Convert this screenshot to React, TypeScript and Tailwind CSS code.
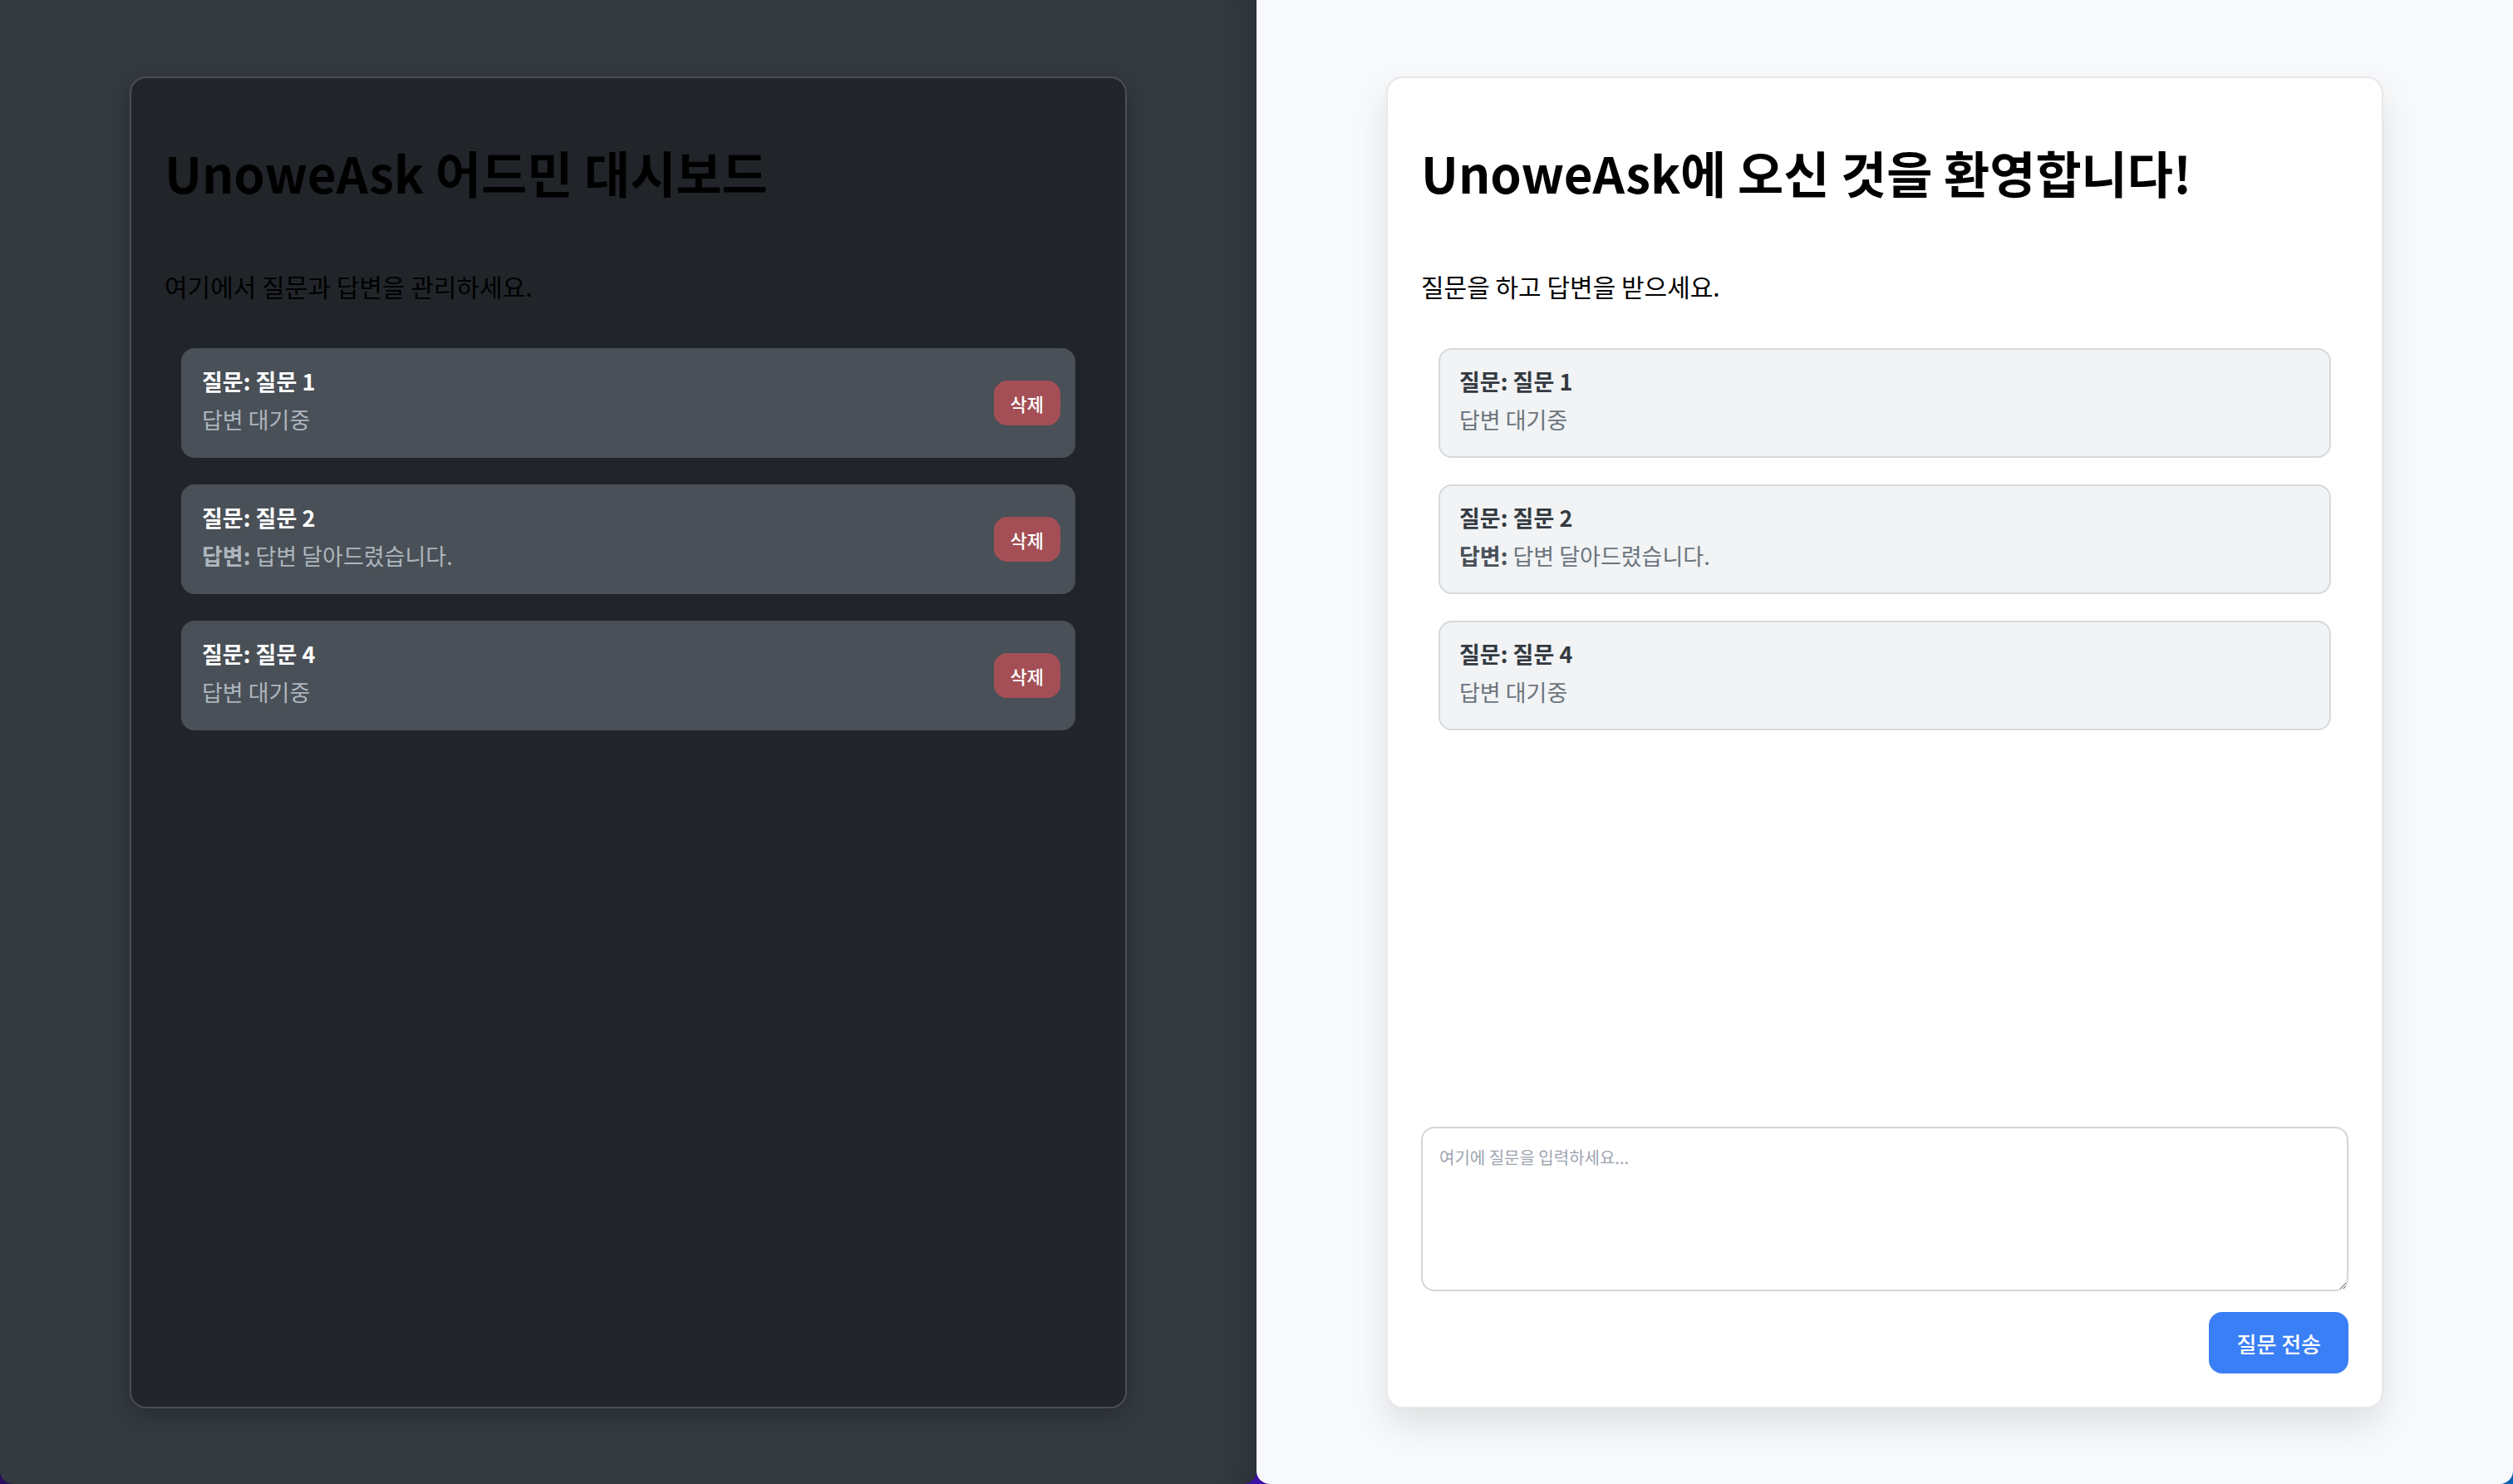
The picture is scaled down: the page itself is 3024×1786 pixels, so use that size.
import { useState } from 'react';

type Question = {
  id: number;
  text: string;
  answer?: string;
};

const questions: Question[] = [
  { id: 1, text: '질문 1' },
  { id: 2, text: '질문 2', answer: '답변 달아드렸습니다.' },
  { id: 4, text: '질문 4' },
];

function AdminPane() {
  return (
    <div className="flex-1 h-full flex flex-col px-[156px] pt-[92px] pb-[91px] bg-[#343a40] rounded-b-[16px] shadow-[inset_-40px_0_40px_-30px_rgba(0,0,0,0.18)]">
      <div className="flex-1 flex flex-col bg-[#212529] border-2 border-[#4a4f55] rounded-[20px] p-10 shadow-[0_8px_30px_rgba(0,0,0,0.25)]">
        <h1 className="mt-[37px] text-[60px] leading-[72px] font-bold text-black">
          UnoweAsk 어드민 대시보드
        </h1>
        <p className="mt-[77px] text-[30px] leading-[48px] text-black">
          여기에서 질문과 답변을 관리하세요.
        </p>

        {/* Question list */}
        <ul className="mt-[51px] px-[20px] flex flex-col gap-[32px]">
          {questions.map((q) => (
            <li
              key={q.id}
              className="flex items-center justify-between bg-[#495057] rounded-[16px] pl-[25px] pr-[18px] pt-[17px] pb-[23px]"
            >
              <div className="text-[27px] leading-[46px]">
                <div className="font-bold text-white">질문: {q.text}</div>
                {q.answer ? (
                  <div className="text-[#adb5bd]">
                    <span className="font-bold">답변:</span> {q.answer}
                  </div>
                ) : (
                  <div className="text-[#adb5bd]">답변 대기중</div>
                )}
              </div>
              <button className="h-[54px] px-[20px] mt-[6px] rounded-[16px] bg-[#a44f56] text-white text-[22px] font-medium">
                삭제
              </button>
            </li>
          ))}
        </ul>
      </div>
    </div>
  );
}

function UserPane() {
  const [text, setText] = useState('');

  return (
    <div className="flex-1 h-full flex flex-col px-[156px] pt-[92px] pb-[91px] bg-[#f8f9fa] rounded-b-[16px]">
      <div className="flex-1 flex flex-col bg-white border-2 border-[#e6e8eb] rounded-[20px] p-10 shadow-[0_20px_40px_rgba(0,0,0,0.1)]">
        <h1 className="mt-[37px] text-[60px] leading-[72px] font-bold text-black">
          UnoweAsk에 오신 것을 환영합니다!
        </h1>
        <p className="mt-[77px] text-[30px] leading-[48px] text-black">
          질문을 하고 답변을 받으세요.
        </p>

        <ul className="flex-1 mt-[51px] px-[21px] flex flex-col gap-[32px]">
          {questions.map((q) => (
            <li
              key={q.id}
              className="bg-[#f1f3f5] border-2 border-[#d5d9dd] rounded-[16px] px-[23px] pt-[15px] pb-[21px] text-[27px] leading-[46px]"
            >
              <div className="font-bold text-[#343a40]">질문: {q.text}</div>
              {q.answer ? (
                <div className="text-[#6c757d]">
                  <span className="font-bold text-[#495057]">답변:</span> {q.answer}
                </div>
              ) : (
                <div className="text-[#6c757d]">답변 대기중</div>
              )}
            </li>
          ))}
        </ul>

        {/* Ask form */}
        <textarea
          value={text}
          onChange={(e) => setText(e.target.value)}
          placeholder="여기에 질문을 입력하세요..."
          className="w-full h-[198px] p-5 border-2 border-[#d1d5db] rounded-[16px] text-[20px] leading-[30px] text-[#212529] placeholder:text-[#9ca3af] resize-y outline-none"
        />
        <div className="flex justify-end mt-[25px]">
          <button className="h-[74px] px-[33px] rounded-[16px] bg-[#3a7ff6] text-white text-[26px] font-medium">
            질문 전송
          </button>
        </div>
      </div>
    </div>
  );
}

export default function App() {
  return (
    <div className="w-full h-[1786px] flex bg-gradient-to-r from-[#2a0d5e] via-[#3a12a6] to-[#0a5fb2] font-['Noto_Sans_CJK_KR',sans-serif]">
      <AdminPane />
      <UserPane />
    </div>
  );
}
